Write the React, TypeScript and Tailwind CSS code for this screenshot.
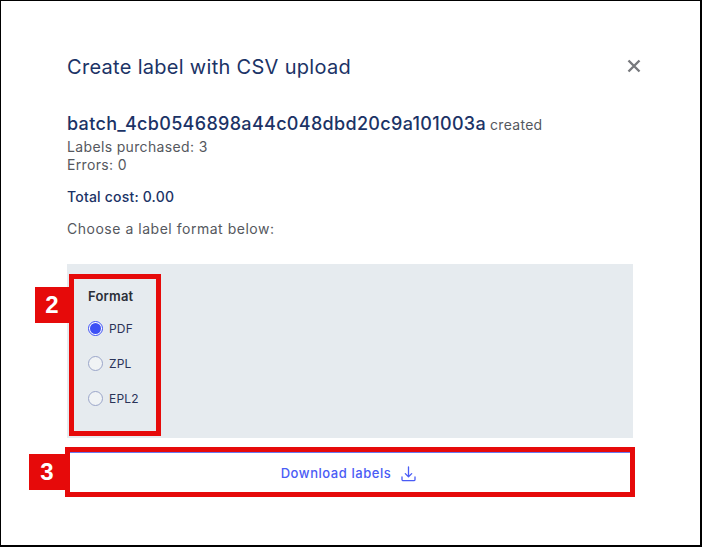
import React from "react";

const font = { fontFamily: '"Inter", "Liberation Sans", sans-serif' };

function Radio({ label, checked }: { label: string; checked?: boolean }) {
  return (
    <label className="flex items-center gap-[6px] h-[35px]">
      {checked ? (
        <span className="w-[15px] h-[15px] rounded-full border border-[#3d50f5] bg-white flex items-center justify-center">
          <span className="w-[11px] h-[11px] rounded-full bg-[#3d50f5]" />
        </span>
      ) : (
        <span className="w-[15px] h-[15px] rounded-full border border-[#9aa5c9] bg-white/40" />
      )}
      <span className="text-[12px] tracking-[0.2px] text-[#2a3358]">{label}</span>
    </label>
  );
}

export default function App() {
  return (
    <div style={font} className="relative w-[702px] h-[547px] bg-white border border-black border-r-2 border-b-2 overflow-hidden">
      <div className="pl-[66px] pr-[67px] pt-[53px]">
        <div className="flex items-center justify-between h-[26px]">
          <h1 className="text-[20px] leading-[26px] font-normal tracking-[0.3px] text-[#1b3366]">Create label with CSV upload</h1>
          <svg width="14" height="14" viewBox="0 0 14 14" className="mr-[-8px] mb-[2px]" fill="none" stroke="#77797d" strokeWidth="2.4">
            <path d="M1.5 1.5 12.5 12.5M12.5 1.5 1.5 12.5" />
          </svg>
        </div>
        <div className="mt-[31px] flex items-baseline gap-[4px] h-[26px]">
          <span className="text-[18px] font-medium leading-[26px] tracking-[0.32px] text-[#1b3366]">batch_4cb0546898a44c048dbd20c9a101003a</span>
          <span className="text-[14px] text-[#55585e] tracking-[0.3px]">created</span>
        </div>
        <p className="mt-[1px] text-[14px] leading-[18px] tracking-[0.35px] text-[#55585e]">Labels purchased: 3</p>
        <p className="text-[14px] leading-[18px] tracking-[0.35px] text-[#55585e]">Errors: 0</p>
        <p className="mt-[13px] text-[14px] leading-[20px] font-medium tracking-[0.2px] text-[#1b3366]">Total cost: 0.00</p>
        <p className="mt-[12px] text-[14px] leading-[20px] tracking-[0.52px] text-[#55585e]">Choose a label format below:</p>

        <div className="mt-[25px] h-[174px] bg-[#e6ebef] pl-[21px] pt-[22px]">
          <div className="text-[13px] leading-[20px] font-semibold tracking-[0.2px] text-[#2b2f38]">Format</div>
          <div className="mt-[5px]">
            <Radio label="PDF" checked />
            <Radio label="ZPL" />
            <Radio label="EPL2" />
          </div>
        </div>

        <div className="mt-[14px] h-px bg-[#6b78f0]" />
        <button className="w-full h-[41px] pt-[1px] pr-[3px] bg-white flex items-center justify-center gap-[10px] text-[13px] font-medium tracking-[0.55px] text-[#4a5cf5]">
          Download labels
          <svg width="15" height="16" viewBox="0 0 15 16" fill="none" stroke="#4a5cf5" strokeWidth="1.3" strokeLinecap="round" strokeLinejoin="round">
            <path d="M7.5 1v9.5M4.3 7.6 7.5 10.8l3.2-3.2M1 11v2.5a1.2 1.2 0 0 0 1.2 1.2h10.6a1.2 1.2 0 0 0 1.2-1.2V11" />
          </svg>
        </button>
      </div>

      <div className="absolute left-[68px] top-[273px] w-[92px] h-[162px] border-[5px] border-[#e60a0a]" />
      <div className="absolute left-[34px] top-[286px] w-[34px] h-[36px] bg-[#e60a0a] flex items-center justify-center text-white text-[24px] font-semibold" style={{ fontFamily: '"Liberation Sans", sans-serif' }}>2</div>
      <div className="absolute left-[64px] top-[446px] w-[570px] h-[50px] border-[5px] border-[#e60a0a]" />
      <div className="absolute left-[28px] top-[453px] w-[36px] h-[36px] bg-[#e60a0a] flex items-center justify-center text-white text-[24px] font-semibold" style={{ fontFamily: '"Liberation Sans", sans-serif' }}>3</div>
    </div>
  );
}
